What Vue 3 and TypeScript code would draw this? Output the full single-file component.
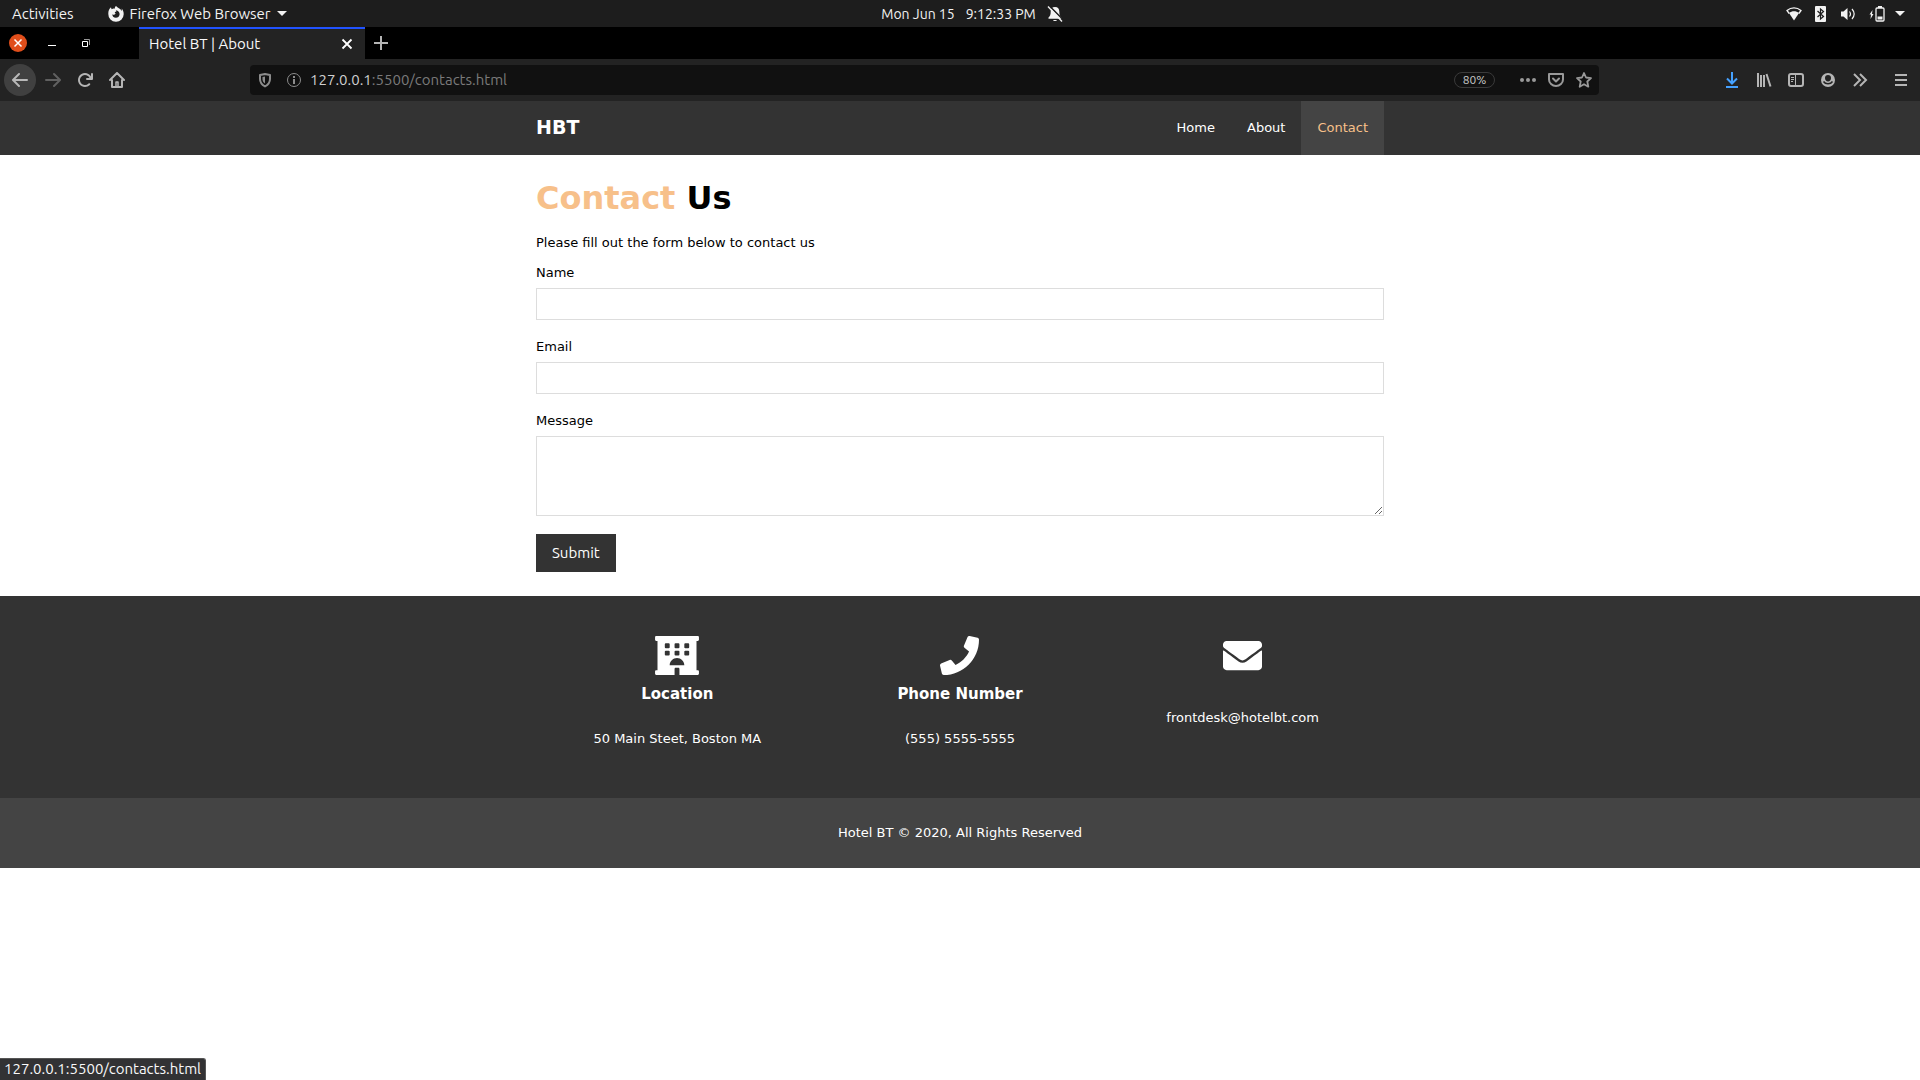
<script setup lang="ts">
import { ref } from 'vue'

interface NavLink {
  label: string
  href: string
  active: boolean
}

const links: NavLink[] = [
  { label: 'Home', href: '#home', active: false },
  { label: 'About', href: '#about', active: false },
  { label: 'Contact', href: '#contact', active: true },
]

const name = ref('')
const email = ref('')
const message = ref('')
</script>

<template>
  <div class="screen">
    <div class="system-bar">
      <div class="system-left">
        <button class="plain" type="button">Activities</button>
        <button class="plain app-menu" type="button">
          <svg width="16" height="16" viewBox="0 0 16 16" aria-hidden="true">
            <path fill="#f2f2f2" d="M8 0c-.9.7-1.300 1.600-1.200 2.700C5.700 2.300 4.600 2.500 3.800 3.200 3.200 2.700 3 2 3 1.300 1.200 2.700.2 5 .3 8a7.700 7.700 0 0 0 15.400.3c.1-2.600-.8-4.500-2.200-5.800.4 1 .5 1.700.4 2.400C12.500 2.700 10.300 2.300 8 0z" />
            <path fill="#1d1d1d" d="M7.800 4.300c2.600.4 4 2 3.800 4.200-.2 2-1.800 3.300-3.700 3.300-2.300 0-3.800-1.800-3.500-3.800.4.700 1 1 1.700.8l1.700-1-1-.9.2-.9 1.400-.5z" />
          </svg>
          Firefox Web Browser
          <svg width="10" height="6" viewBox="0 0 10 6" aria-hidden="true"><path fill="#f2f2f2" d="M0 0h10L5 5z" /></svg>
        </button>
      </div>
      <div class="clock">
        <span>Mon Jun 15</span><span>9:12:33 PM</span>
        <svg width="16" height="16" viewBox="0 0 16 16" aria-hidden="true">
          <path fill="#f2f2f2" d="M8 1c3 0 4.300 2 4.300 4.500 0 3.500.7 4.500 2.200 6v1.300H1.500v-1.300c1.500-1.500 2.200-2.500 2.200-6C3.700 3 5 1 8 1zM6 14h4c-.5 1.300-3.500 1.300-4 0z" />
          <path stroke="#1d1d1d" stroke-width="1.500" d="M2.500 0l14 14" />
          <path stroke="#f2f2f2" stroke-width="1.400" d="M1 .5l14 15" />
        </svg>
      </div>
      <div class="system-right">
        <div class="indicators">
          <svg width="16" height="16" viewBox="0 0 16 16" aria-hidden="true">
            <path fill="#f2f2f2" d="M3 7c3-2.200 7-2.200 10 0l-5 7.500z" />
            <path fill="none" stroke="#f2f2f2" stroke-width="1.300" d="M3.200 7.500L1 4.500c4.200-3.500 9.800-3.500 14 0l-2.200 3" />
          </svg>
          <svg width="12" height="16" viewBox="0 0 12 16" aria-hidden="true">
            <rect width="11" height="16" rx="1" fill="#f2f2f2" />
            <path fill="none" stroke="#1d1d1d" stroke-width="1.200" d="M2.500 5l6 5.500-3 2.500V3l3 2.500-6 5.500" />
          </svg>
          <svg width="16" height="16" viewBox="0 0 16 16" aria-hidden="true">
            <path fill="#f2f2f2" d="M1 5.500h2.500L7.500 2v12l-4-3.500H1z" />
            <path fill="none" stroke="#f2f2f2" stroke-width="1.200" d="M9.500 5.500c1.200 1.500 1.200 3.500 0 5M12 3c2.600 3 2.600 7 0 10" />
          </svg>
          <svg width="16" height="16" viewBox="0 0 16 16" aria-hidden="true">
            <path fill="#f2f2f2" d="M3.500 4L.5 8.500H2L1.500 13l3-5H3zM9 0h4v2H9zM8.500 10.500h5v3h-5z" />
            <rect x="7" y="2" width="8" height="13" rx="1" fill="none" stroke="#f2f2f2" stroke-width="1.300" />
          </svg>
        </div>
        <svg width="10" height="6" viewBox="0 0 10 6" aria-hidden="true"><path fill="#f2f2f2" d="M0 0h10L5 5z" /></svg>
      </div>
    </div>

    <div class="tab-bar">
      <div class="window-buttons">
        <button type="button" aria-label="Close window">
          <svg width="18" height="18" viewBox="0 0 18 18"><circle cx="9" cy="9" r="9" fill="#e04e1b" /><path stroke="#fff" stroke-width="1.500" d="M5.500 5.500l7 7m0-7l-7 7" /></svg>
        </button>
        <button type="button" aria-label="Minimize window">
          <svg width="18" height="18" viewBox="0 0 18 18"><path fill="#fff" d="M5 11h8v1H5z" /></svg>
        </button>
        <button type="button" aria-label="Restore window">
          <svg width="18" height="18" viewBox="0 0 18 18" fill="none"><path stroke="#fff" d="M5.500 7.500h5v5h-5z" /><path stroke="#999" d="M7 5.500h5.500V11" /></svg>
        </button>
      </div>
      <div class="tab">
        <span>Hotel BT | About</span>
        <button class="tab-close" type="button" aria-label="Close tab">
          <svg width="12" height="12" viewBox="0 0 12 12"><path stroke="#fff" stroke-width="1.800" d="M1.500 1.500l9 9m0-9l-9 9" /></svg>
        </button>
      </div>
      <button class="new-tab" type="button" aria-label="New tab">
        <svg width="14" height="14" viewBox="0 0 14 14"><path stroke="#b5b5b5" stroke-width="2" d="M7 0v14M0 7h14" /></svg>
      </button>
    </div>

    <div class="toolbar">
      <div class="tool-group">
        <button class="tool back" type="button" aria-label="Back">
          <svg width="16" height="16" viewBox="0 0 16 16"><path fill="#b8b8b8" d="M15 7H3.414l4.293-4.293a1 1 0 0 0-1.414-1.414l-6 6a1 1 0 0 0 0 1.414l6 6a1 1 0 0 0 1.414-1.414L3.414 9H15a1 1 0 0 0 0-2z" /></svg>
        </button>
        <button class="tool" type="button" aria-label="Forward">
          <svg width="16" height="16" viewBox="0 0 16 16"><path fill="#606060" d="M1 7h11.586L8.293 2.707a1 1 0 0 1 1.414-1.414l6 6a1 1 0 0 1 0 1.414l-6 6a1 1 0 0 1-1.414-1.414L12.586 9H1a1 1 0 0 1 0-2z" /></svg>
        </button>
        <button class="tool" type="button" aria-label="Reload">
          <svg width="16" height="16" viewBox="0 0 16 16"><path fill="#b5b5b5" d="M15 1a1 1 0 0 0-1 1v2.418A6.995 6.995 0 1 0 8 15a6.954 6.954 0 0 0 4.950-2.050 1 1 0 0 0-1.414-1.414A5.019 5.019 0 1 1 12.549 6H10a1 1 0 0 0 0 2h5a1 1 0 0 0 1-1V2a1 1 0 0 0-1-1z" /></svg>
        </button>
        <button class="tool" type="button" aria-label="Home">
          <svg width="16" height="16" viewBox="0 0 16 16" fill="none" stroke="#b5b5b5" stroke-width="2" stroke-linejoin="round" stroke-linecap="round"><path d="M1 8l7-7 7 7M3 8v7h10V8" /><path stroke-width="1.500" d="M7 14v-4h2v4" /></svg>
        </button>
      </div>

      <div class="url-bar">
        <svg width="16" height="16" viewBox="0 0 16 16" aria-hidden="true">
          <path fill="none" stroke="#8c8c8c" stroke-width="2" stroke-linejoin="round" d="M8 2L13 3v4c0 3.500-1.500 5.500-5 7.500C4.500 12.500 3 10.500 3 7V3z" />
          <path fill="#8c8c8c" d="M8 4.500v7C6 10 5.500 9 5.500 7V5z" />
        </svg>
        <svg width="16" height="16" viewBox="0 0 16 16" aria-hidden="true">
          <circle cx="8" cy="8" r="6.500" fill="none" stroke="#8c8c8c" />
          <path fill="#8c8c8c" d="M7 4h2v2H7zM7 7h2v5H7z" />
        </svg>
        <div class="url">127.0.0.1<span>:5500/contacts.html</span></div>
        <button class="zoom-level" type="button">80%</button>
        <div class="url-actions">
          <svg width="16" height="16" viewBox="0 0 16 16" fill="#999" aria-hidden="true"><circle cx="2" cy="8" r="2" /><circle cx="8" cy="8" r="2" /><circle cx="14" cy="8" r="2" /></svg>
          <svg width="16" height="16" viewBox="0 0 16 16" fill="none" stroke="#999" stroke-width="2" stroke-linecap="round" stroke-linejoin="round" aria-hidden="true"><path d="M1 2h14v5.500a7 6.500 0 0 1-14 0z" /><path d="M5 6.500l3 3 3-3" /></svg>
          <svg width="16" height="16" viewBox="0 0 16 16" fill="none" stroke="#999" stroke-width="1.800" stroke-linejoin="round" aria-hidden="true"><path d="M8 1l2 4.500 5 .6-3.700 3.400 1 5.200L8 12.200l-4.300 2.500 1-5.200L1 6.100l5-.6z" /></svg>
        </div>
      </div>

      <div class="tool-group">
        <button class="tool" type="button" aria-label="Downloads">
          <svg width="16" height="16" viewBox="0 0 16 16" fill="none" stroke="#45a1ff" stroke-width="2"><path d="M8 0v11M3 6.500l5 5 5-5M2 15h12" /></svg>
        </button>
        <button class="tool" type="button" aria-label="Library">
          <svg width="16" height="16" viewBox="0 0 16 16" stroke="#b5b5b5" stroke-width="2"><path d="M2 1v14M5 3v12M8 3v12M10.500 2l4 12.500" /></svg>
        </button>
        <button class="tool" type="button" aria-label="Sidebars">
          <svg width="16" height="16" viewBox="0 0 16 16" fill="none" stroke="#b5b5b5"><rect x="1" y="2" width="14" height="12" rx="2" stroke-width="2" /><path d="M7.500 2v12M3 5.500h3M3 7.500h3M3 9.500h2" /></svg>
        </button>
        <button class="tool" type="button" aria-label="Account">
          <svg width="16" height="16" viewBox="0 0 16 16"><circle cx="8" cy="8" r="7" fill="#b5b5b5" /><path fill="#232323" d="M8 3a3 3 0 0 1 3 3c0 2-1.300 3.500-3 3.500S5 8 5 6a3 3 0 0 1 3-3z" /><path fill="none" stroke="#232323" stroke-width="1.500" d="M3.500 9.500c1 1.500 2.500 2.200 4.500 2.200s3.500-.7 4.500-2.200" /></svg>
        </button>
        <button class="tool" type="button" aria-label="More tools">
          <svg width="16" height="16" viewBox="0 0 16 16" fill="none" stroke="#b5b5b5" stroke-width="2"><path d="M2 2l6 6-6 6M8 2l6 6-6 6" /></svg>
        </button>
        <button class="tool menu" type="button" aria-label="Menu">
          <svg width="16" height="16" viewBox="0 0 16 16" stroke="#b5b5b5" stroke-width="2"><path d="M2 3h12M2 8h12M2 13h12" /></svg>
        </button>
      </div>
    </div>

    <header class="site-header">
      <div class="container header-inner">
        <a class="logo" href="#home">HBT</a>
        <nav>
          <a v-for="link in links" :key="link.label" :href="link.href" :class="{ active: link.active }">{{ link.label }}</a>
        </nav>
      </div>
    </header>

    <main class="container contact">
      <h1><span>Contact</span> Us</h1>
      <p>Please fill out the form below to contact us</p>
      <form @submit.prevent>
        <div class="field">
          <label for="name">Name</label>
          <input id="name" v-model="name" type="text" />
        </div>
        <div class="field">
          <label for="email">Email</label>
          <input id="email" v-model="email" type="email" />
        </div>
        <div class="field">
          <label for="message">Message</label>
          <textarea id="message" v-model="message"></textarea>
        </div>
        <button class="submit" type="submit">Submit</button>
      </form>
    </main>

    <section class="info">
      <div class="container info-grid">
        <div class="info-box">
          <svg width="44" height="39" viewBox="0 0 576 512" aria-hidden="true"><path fill="#fff" fill-rule="evenodd" d="M560 64c8.840 0 16-7.160 16-16V16c0-8.840-7.160-16-16-16H16C7.160 0 0 7.160 0 16v32c0 8.840 7.160 16 16 16h16v384H16c-8.840 0-16 7.160-16 16v32c0 8.840 7.160 16 16 16h240v-80c0-8.800 7.200-16 16-16h32c8.800 0 16 7.200 16 16v80h240c8.840 0 16-7.160 16-16v-32c0-8.840-7.160-16-16-16h-16V64zM141 96h38q13 0 13 13v38q0 13-13 13h-38q-13 0-13-13v-38q0-13 13-13zM269 96h38q13 0 13 13v38q0 13-13 13h-38q-13 0-13-13v-38q0-13 13-13zM397 96h38q13 0 13 13v38q0 13-13 13h-38q-13 0-13-13v-38q0-13 13-13zM141 192h38q13 0 13 13v38q0 13-13 13h-38q-13 0-13-13v-38q0-13 13-13zM269 192h38q13 0 13 13v38q0 13-13 13h-38q-13 0-13-13v-38q0-13 13-13zM397 192h38q13 0 13 13v38q0 13-13 13h-38q-13 0-13-13v-38q0-13 13-13zM192 384c0-53 43-96 96-96s96 43 96 96z" /></svg>
          <h3>Location</h3>
          <p>50 Main Steet, Boston MA</p>
        </div>
        <div class="info-box">
          <svg width="39" height="39" viewBox="0 0 512 512" aria-hidden="true"><path fill="#fff" d="M493.400 24.600l-104-24c-11.300-2.600-22.900 3.300-27.500 13.900l-48 112c-4.200 9.800-1.400 21.300 6.900 28l60.600 49.600c-36 76.700-98.900 140.500-177.200 177.200l-49.600-60.600c-6.800-8.300-18.200-11.100-28-6.900l-112 48C3.900 366.500-2 378.100.6 389.400l24 104C27.100 504.200 36.700 512 48 512c256.100 0 464-207.500 464-464 0-11.200-7.700-20.900-18.600-23.400z" /></svg>
          <h3>Phone Number</h3>
          <p>(555) 5555-5555</p>
        </div>
        <div class="info-box">
          <svg width="39" height="39" viewBox="0 0 512 512" aria-hidden="true"><path fill="#fff" d="M502.300 190.800c3.900-3.100 9.700-.2 9.700 4.700V400c0 26.500-21.500 48-48 48H48c-26.500 0-48-21.500-48-48V195.600c0-5 5.700-7.800 9.700-4.700 22.400 17.400 52.100 39.500 154.100 113.600 21.100 15.400 56.700 47.800 92.200 47.600 35.700.3 72-32.800 92.300-47.600 102-74.100 131.600-96.300 154-113.700zM256 320c23.200.4 56.600-29.200 73.400-41.400 132.700-96.300 142.800-104.700 173.400-128.700 5.800-4.500 9.200-11.500 9.200-18.900v-19c0-26.500-21.500-48-48-48H48c-26.500 0-48 21.500-48 48v19c0 7.400 3.400 14.300 9.200 18.900 30.600 23.900 40.700 32.400 173.400 128.700 16.800 12.200 50.200 41.800 73.400 41.400z" /></svg>
          <p class="email">frontdesk@hotelbt.com</p>
        </div>
      </div>
    </section>

    <footer class="site-footer">Hotel BT © 2020, All Rights Reserved</footer>

    <div class="link-status">127.0.0.1:5500/contacts.html</div>
  </div>
</template>

<style>
body {
  background: #fff;
}
</style>

<style scoped>
* {
  box-sizing: border-box;
}

.screen {
  color: #000;
  font-family: "DejaVu Sans", sans-serif;
  font-size: 13px;
  line-height: 20px;
}

svg {
  display: block;
  flex: none;
}

button {
  padding: 0;
  border: 0;
  background: none;
  color: inherit;
  font: inherit;
}

a {
  color: inherit;
  text-decoration: none;
}

h1,
h3,
p {
  margin: 0;
}

.system-bar,
.tab-bar,
.toolbar,
.link-status,
.submit {
  font-family: Ubuntu, "Noto Sans", sans-serif;
  font-size: 15px;
}

/* Desktop top bar */
.system-bar {
  display: grid;
  grid-template-columns: 1fr auto 1fr;
  align-items: center;
  height: 27px;
  padding: 0 15px 0 12px;
  background: #1d1d1d;
  color: #f2f2f2;
}

.system-left,
.app-menu,
.clock,
.indicators,
.system-right {
  display: flex;
  align-items: center;
}

.system-left {
  gap: 34px;
}

.app-menu {
  gap: 6px;
}

.clock {
  gap: 11px;
  padding-left: 27px;
  font-size: 14px;
}

.system-right {
  justify-content: flex-end;
  gap: 10px;
}

.indicators {
  gap: 13px;
}

/* Tab strip */
.tab-bar {
  display: flex;
  align-items: stretch;
  height: 32px;
  background: #000;
  color: #f9f9fa;
}

.window-buttons {
  display: flex;
  align-items: center;
  gap: 16px;
  width: 139px;
  padding-left: 9px;
}

.tab {
  display: flex;
  align-items: center;
  justify-content: space-between;
  width: 226px;
  padding: 0 12px 0 10px;
  border-top: 2px solid #2153ff;
  background: #232323;
}

.new-tab {
  padding: 0 9px;
}

/* Navigation toolbar */
.toolbar {
  display: flex;
  align-items: center;
  height: 42px;
  padding: 0 3px 0 4px;
  background: #232323;
}

.tool-group {
  display: flex;
  align-items: center;
}

.tool {
  display: grid;
  place-items: center;
  width: 32px;
  height: 32px;
}

.back {
  margin-right: 1px;
  border-radius: 50%;
  background: #404040;
}

.menu {
  margin-left: 9px;
}

.url-bar {
  display: flex;
  flex: 1;
  align-items: center;
  gap: 13px;
  height: 30px;
  margin: 0 117px;
  padding: 0 7px;
  border-radius: 4px;
  background: #111;
}

.url {
  flex: 1;
  color: #d0d0d0;
  margin-left: -5px;
}

.url span {
  color: #7a7a7a;
}

.zoom-level {
  width: 41px;
  height: 16px;
  border: 1px solid #3a3a3a;
  border-radius: 8px;
  color: #c8c8c8;
  font-size: 12px;
  line-height: 14px;
}

.url-actions {
  display: flex;
  gap: 12px;
  margin-left: 12px;
}

/* Site */
.container {
  width: 100%;
  max-width: 880px;
  margin: 0 auto;
  padding: 0 16px;
}

.site-header {
  background: #333;
  color: #fff;
}

.header-inner {
  display: flex;
  align-items: center;
  justify-content: space-between;
}

.logo {
  padding-bottom: 2px;
  font-size: 19px;
  font-weight: bold;
}

nav {
  display: flex;
}

nav a {
  padding: 17px 16px;
}

nav .active {
  background: #444;
  color: #f7c08a;
}

.contact {
  padding-top: 18px;
  padding-bottom: 24px;
}

.contact h1 {
  margin-bottom: 9px;
  font-size: 32px;
  line-height: 51px;
}

.contact h1 span {
  color: #f7c08a;
}

form {
  padding-top: 10px;
}

.field {
  display: flex;
  flex-direction: column;
  gap: 5px;
  margin-bottom: 17px;
}

input,
textarea {
  width: 100%;
  height: 32px;
  padding: 6px;
  border: 1px solid #ddd;
  border-radius: 0;
  background: #fff;
  font: inherit;
}

textarea {
  height: 80px;
}

.submit {
  display: block;
  height: 38px;
  margin-top: 18px;
  padding: 0 16px;
  background: #333;
  color: #fff;
}

.info {
  background: #333;
  color: #fff;
}

.info-grid {
  display: grid;
  grid-template-columns: repeat(3, 1fr);
  padding-top: 40px;
  padding-bottom: 49px;
}

.info-box {
  display: flex;
  flex-direction: column;
  align-items: center;
}

.info-box h3 {
  margin: 7px 0 23px;
  font-size: 15px;
  line-height: 24px;
}

.info-box .email {
  margin-top: 33px;
}

.site-footer {
  padding: 25px 16px;
  background: #444;
  color: #fff;
  text-align: center;
}

/* Link target preview shown over the page corner */
.link-status {
  position: fixed;
  bottom: 0;
  left: 0;
  height: 22px;
  padding: 0 4px;
  border-top: 1px solid #555;
  border-right: 1px solid #555;
  border-top-right-radius: 3px;
  background: #323234;
  color: #f9f9fa;
}
</style>
